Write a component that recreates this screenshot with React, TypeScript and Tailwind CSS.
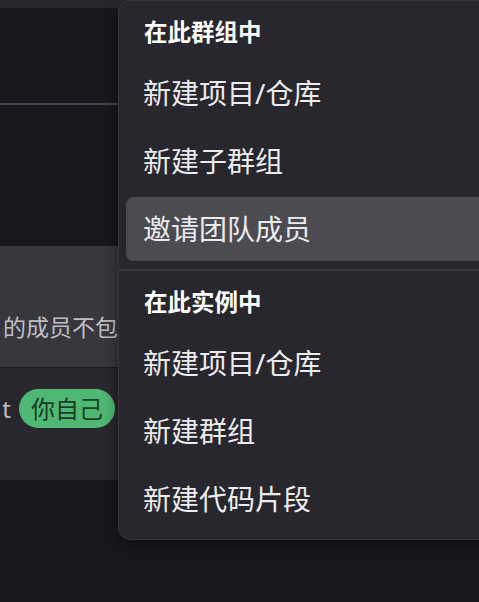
const font = { fontFamily: '"Noto Sans", "Noto Sans CJK SC", sans-serif' };

type Item = { label: string; active?: boolean };

const groups: { title: string; items: Item[] }[] = [
  {
    title: '在此群组中',
    items: [{ label: '新建项目/仓库' }, { label: '新建子群组' }, { label: '邀请团队成员', active: true }],
  },
  {
    title: '在此实例中',
    items: [{ label: '新建项目/仓库' }, { label: '新建群组' }, { label: '新建代码片段' }],
  },
];

export default function App() {
  return (
    <div className="relative h-[602px] w-full overflow-hidden bg-[#18171d]" style={font}>
      {/* page behind the dropdown */}
      <div className="flex flex-col">
        <div className="h-[8px] bg-[#28272d]" />
        <div className="h-[97px] border-b-2 border-[#46454f] bg-[#18171d]" />
        <div className="h-[141px] bg-[#18171d]" />
        <div className="flex h-[121px] items-end bg-[#38373d] pb-[28px]">
          <span className="ml-[3px] whitespace-nowrap text-[23px] leading-[24px] text-[#bfbfc3]">的成员不包含</span>
        </div>
        <div className="h-px bg-[#1c1b21]" />
        <div className="flex h-[112px] flex-col bg-[#28272d] pt-[21px]">
          <div className="flex items-center">
            <span className="w-[19px] pr-[8px] text-right text-[24px] leading-[38px] text-[#bfbfc3]">t</span>
            <span className="flex h-[39px] items-center rounded-full bg-[#4fb874] px-[12px] text-[24px] text-[#173d24]">
              你自己
            </span>
          </div>
        </div>
      </div>

      {/* dropdown */}
      <div className="absolute left-[118px] top-[0px] w-[400px] rounded-[12px] border border-[#36353c] bg-[#28272d] py-[6px] shadow-[0_4px_16px_rgba(0,0,0,0.45)]">
        {groups.map((g, gi) => (
          <div key={g.title}>
            {gi > 0 && <div className="my-[6px] h-[2px] bg-[#3a3940]" />}
            <div className="flex h-[52px] items-center pl-[25px] text-[23.5px] font-bold text-white">{g.title}</div>
            <ul className="flex flex-col">
              {g.items.map((it) => (
                <li
                  key={it.label}
                  className={
                    'mx-[7px] my-[2px] flex h-[64px] items-center rounded-[8px] pl-[17px] text-[28px] text-[#ececef] ' +
                    (it.active ? 'bg-[#4c4b51]' : '')
                  }
                >
                  {it.label}
                </li>
              ))}
            </ul>
          </div>
        ))}
      </div>
    </div>
  );
}
